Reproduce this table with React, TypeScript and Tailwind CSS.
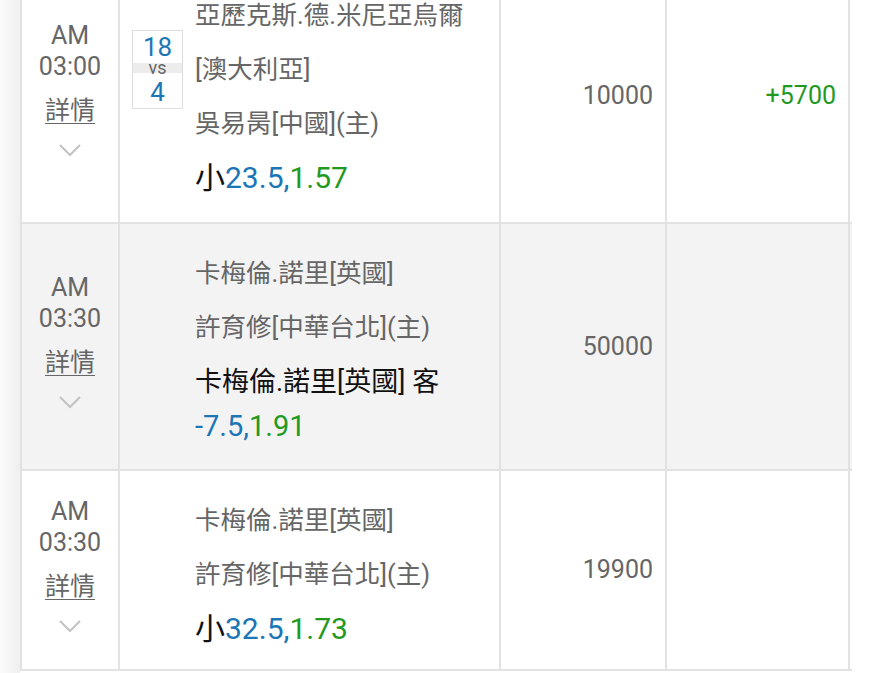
import React from "react";

const BLUE = "text-[#1b76b6]";
const GREEN = "text-[#1f9a1f]";

function Chevron() {
  return (
    <svg width="22" height="24" viewBox="0 0 22 24" className="mt-[12px] mb-[6px]">
      <polyline points="1,7 11,17 21,7" fill="none" stroke="#c4c4c4" strokeWidth="2.2" />
    </svg>
  );
}

function TimeCell({ time }: { time: string }) {
  return (
    <div className="flex flex-col items-center justify-center border-l-2 border-r-2 border-[#e2e2e2] text-[#666] text-[25px]">
      <div className="leading-[30px]">AM</div>
      <div className="leading-[31px]">{time}</div>
      <div className="mt-[14px] leading-[30px] underline underline-offset-[4px] decoration-1">詳情</div>
      <Chevron />
    </div>
  );
}

function ScoreBox() {
  return (
    <div className="w-[51px] border border-[#dedede] bg-white flex flex-col items-center">
      <div className={`h-[32px] w-full flex items-center justify-center text-[26px] leading-none ${BLUE}`}>18</div>
      <div className="h-[10px] w-full bg-[#ececec] flex items-center justify-center text-[18px] leading-[10px] text-[#666]">vs</div>
      <div className={`h-[35px] w-full flex items-center justify-center pt-[4px] text-[26px] leading-none ${BLUE}`}>4</div>
    </div>
  );
}

function MatchCell({
  names,
  bet,
  score,
  pad,
}: {
  names: string[];
  bet: React.ReactNode;
  score?: boolean;
  pad: string;
}) {
  return (
    <div className={`border-r-2 border-[#e2e2e2] pl-[12px] pr-[16px] pt-[22px] ${pad}`}>
      <div className="flex items-center">
        <div className="w-[63px] shrink-0">{score ? <ScoreBox /> : null}</div>
        <div className="flex-1 text-[25.5px] leading-[54px] text-[#666]">
          {names.map((n) => (
            <div key={n}>{n}</div>
          ))}
        </div>
      </div>
      <div className="pl-[63px] mt-[6px] leading-[44px]">{bet}</div>
    </div>
  );
}

function Row({
  bg,
  time,
  names,
  bet,
  amount,
  result,
  score,
  extra,
  pad,
  numPad,
}: {
  bg: string;
  time: string;
  names: string[];
  bet: React.ReactNode;
  amount: string;
  result?: string;
  score?: boolean;
  extra?: string;
  pad: string;
  numPad?: string;
}) {
  return (
    <div className={`grid grid-cols-[100px_381px_166px_183px] border-b-2 border-[#e2e2e2] ${bg} ${extra ?? ""}`}>
      <TimeCell time={time} />
      <MatchCell names={names} bet={bet} score={score} pad={pad} />
      <div className={`border-r-2 border-[#e2e2e2] flex items-center justify-end pr-[12px] text-[25px] text-[#666] ${numPad ?? ""}`}>
        {amount}
      </div>
      <div className={`border-r-2 border-[#e2e2e2] flex items-center justify-end pr-[12px] text-[25px] ${GREEN} ${numPad ?? ""}`}>
        {result ?? ""}
      </div>
    </div>
  );
}

export default function App() {
  return (
    <div className="w-[870px] h-[673px] overflow-hidden bg-white flex font-[Roboto,'Noto_Sans_CJK_TC',sans-serif]">
      <div className="w-[20px] shrink-0 bg-linear-to-r from-[#fbfbfb] to-[#efefef]" />
      <div className="w-[832px] shrink-0">
        <Row
          extra="-mt-[34px]"
          pad="pb-[22px]"
          numPad="pt-[4px]"
          bg="bg-white"
          time="03:00"
          score
          names={["亞歷克斯.德.米尼亞烏爾[澳大利亞]", "吳易昺[中國](主)"]}
          bet={
            <div className="text-[30px]">
              <span className="text-[#111]">小</span>
              <span className={BLUE}>23.5,</span>
              <span className={GREEN}>1.57</span>
            </div>
          }
          amount="10000"
          result="+5700"
        />
        <Row
          pad="pb-[21px]"
          bg="bg-[#f3f3f3]"
          time="03:30"
          names={["卡梅倫.諾里[英國]", "許育修[中華台北](主)"]}
          bet={
            <div>
              <div className="text-[27px] text-[#111]">卡梅倫.諾里[英國] 客</div>
              <div className="text-[29px]">
                <span className={BLUE}>-7.5,</span>
                <span className={GREEN}>1.91</span>
              </div>
            </div>
          }
          amount="50000"
        />
        <Row
          pad="pb-[18px]"
          bg="bg-white"
          time="03:30"
          names={["卡梅倫.諾里[英國]", "許育修[中華台北](主)"]}
          bet={
            <div className="text-[30px]">
              <span className="text-[#111]">小</span>
              <span className={BLUE}>32.5,</span>
              <span className={GREEN}>1.73</span>
            </div>
          }
          amount="19900"
        />
      </div>
    </div>
  );
}
